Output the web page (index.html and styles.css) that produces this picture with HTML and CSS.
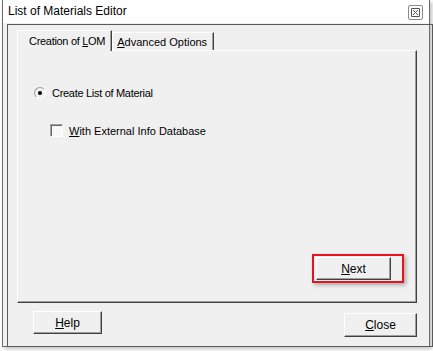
FILE: index.html
```html
<!DOCTYPE html>
<html lang="en">
<head>
  <meta charset="UTF-8">
  <title>List of Materials Editor</title>
  <link rel="stylesheet" href="styles.css">
</head>
<body>

  <div class="window">
    <div class="titlebar">
      <span class="title">List of Materials Editor</span>
      <span class="close-box">
        <svg width="9" height="9" viewBox="0 0 9 9">
          <path d="M0.5 0.5h8v8h-8z M2 2l5 5 M7 2l-5 5" fill="none" stroke="#555" stroke-width="1"/>
        </svg>
      </span>
    </div>

    <div class="frame">
      <div class="tabs">
        <div class="tab active">Creation of <u>L</u>OM</div>
        <div class="tab"><u>A</u>dvanced Options</div>
      </div>

      <div class="panel">
        <div class="option radio-row">
          <span class="radio"><span class="dot"></span></span>
          <span class="label-create">Create List of Material</span>
        </div>
        <div class="option check-row">
          <span class="checkbox"></span>
          <span><u>W</u>ith External Info Database</span>
        </div>

        <div class="panel-foot">
          <div class="highlight">
            <button type="button" class="btn btn-next"><u>N</u>ext</button>
          </div>
        </div>
      </div>

      <div class="buttons">
        <button type="button" class="btn btn-help"><u>H</u>elp</button>
        <button type="button" class="btn btn-close"><u>C</u>lose</button>
      </div>
    </div>
  </div>

</body>
</html>
```

FILE: styles.css
```css
body {
  margin: 0;
  width: 433px;
  height: 351px;
  background: #fff;
  font-family: "Liberation Sans", Arial, sans-serif;
  font-size: 11px;
  color: #000;
  overflow: hidden;
}

.window {
  margin-left: 2px;
  width: 426px;
  height: 346px;
  border: 1px solid #6b6b6b;
  border-top: none;
  background: #f0f0f0;
  box-shadow: 2px 2px 4px rgba(0, 0, 0, 0.25);
}

.titlebar {
  height: 23px;
  display: flex;
  align-items: center;
  justify-content: space-between;
  padding: 0 6px 0 5px;
  background: #fff;
}

.title {
  font-size: 12px;
  margin-top: -1px;
}

.close-box {
  display: flex;
  align-items: center;
  justify-content: center;
  width: 13px;
  height: 13px;
  border: 1px solid #8a8a8a;
  border-radius: 2px;
  margin-top: 2px;
}

.close-box svg {
  display: block;
}

.frame {
  margin: 1px 0 0 4px;
  width: 415px;
  height: 316px;
  border: 1px solid #5a5a5a;
  padding: 5px 0 0 9px;
  box-sizing: content-box;
  display: flex;
  flex-direction: column;
}

.tabs {
  display: flex;
  height: 20px;
}

.tab {
  padding: 3px 6px 0 4px;
  border-top: 1px solid #fff;
  border-left: 1px solid #fff;
  border-right: 1px solid #404040;
  box-shadow: inset -1px 0 0 #a0a0a0;
  margin-top: 2px;
  height: 15px;
  font-size: 11px;
  white-space: nowrap;
}

.tab.active {
  margin-top: 0;
  padding: 4px 6px 0 11px;
  height: 16px;
  margin-bottom: -1px;
  background: #f0f0f0;
  position: relative;
  z-index: 1;
  letter-spacing: -0.3px;
}

.panel {
  width: 398px;
  height: 251px;
  border-top: 1px solid #fff;
  border-left: 1px solid #fff;
  border-right: 1px solid #404040;
  border-bottom: 1px solid #404040;
  box-shadow: inset -1px -1px 0 #a0a0a0;
  display: flex;
  flex-direction: column;
}

.option {
  display: flex;
  align-items: center;
  gap: 6px;
}

.radio-row {
  margin: 36px 0 0 16px;
}

.label-create {
  letter-spacing: -0.3px;
}

.radio {
  width: 12px;
  height: 12px;
  border-radius: 50%;
  border: 1px solid;
  border-color: #a0a0a0 #fff #fff #a0a0a0;
  box-sizing: border-box;
  background: #f0f0f0;
  display: flex;
  align-items: center;
  justify-content: center;
}

.dot {
  width: 4px;
  height: 4px;
  border-radius: 50%;
  background: #000;
}

.check-row {
  margin: 25px 0 0 32px;
  gap: 6px;
}

.checkbox {
  width: 13px;
  height: 13px;
  box-sizing: border-box;
  border: 1px solid;
  border-color: #a0a0a0 #fff #fff #a0a0a0;
  box-shadow: inset 1px 1px 0 #696969;
  background: #f8f8f8;
}

.panel-foot {
  margin-top: auto;
  margin-bottom: 19px;
  display: flex;
  justify-content: flex-end;
  padding-right: 12px;
}

.highlight {
  border: 2px solid #e8141c;
  padding: 1px 11px 1px 2px;
  box-shadow: 2px 2px 4px rgba(0, 0, 0, 0.3);
}

.btn {
  font-family: "Liberation Sans", Arial, sans-serif;
  font-size: 12px;
  background: #f0f0f0;
  color: #000;
  border: 1px solid;
  border-color: #fff #404040 #404040 #fff;
  box-shadow: inset -1px -1px 0 #a0a0a0;
  padding: 0;
  height: 23px;
  border-radius: 0;
}

.btn-next {
  display: block;
  width: 75px;
}

.buttons {
  display: flex;
  justify-content: space-between;
  align-items: flex-start;
  margin-top: 8px;
  padding: 0 15px 0 16px;
}

.btn-help {
  width: 69px;
}

.btn-close {
  width: 73px;
  height: 24px;
  margin-top: 2px;
}
```
